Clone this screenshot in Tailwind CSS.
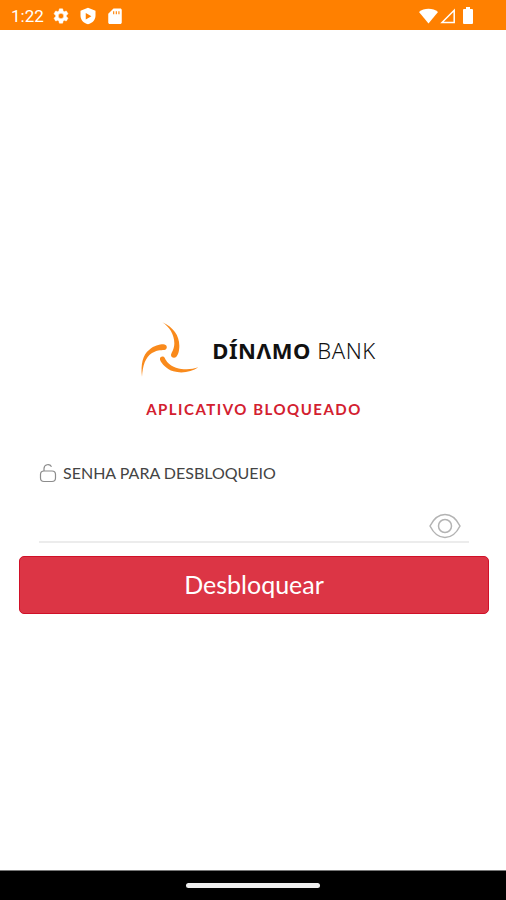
<!DOCTYPE html>
<html lang="pt-BR">
<head>
  <meta charset="UTF-8" />
  <meta name="viewport" content="width=device-width, initial-scale=1.0" />
  <title>Dínamo Bank</title>
  <script src="https://cdn.jsdelivr.net/npm/@tailwindcss/browser@4"></script>
</head>
<body class="min-h-screen flex flex-col bg-white font-['Lato',sans-serif]">

  <!-- Status bar -->
  <header class="h-[30px] pt-px px-[11px] flex items-center justify-between bg-[#ff8000] text-white">
    <div class="flex items-center gap-2">
      <span class="text-[17px] leading-5 font-['Roboto',sans-serif]">1:22</span>
      <svg class="size-[18px]" viewBox="0 0 24 24" fill="currentColor" aria-hidden="true">
        <path d="M19.14 12.94c.04-.3.06-.61.06-.94 0-.32-.02-.64-.07-.94l2.03-1.58a.49.49 0 0 0 .12-.61l-1.92-3.32a.49.49 0 0 0-.59-.22l-2.39.96c-.5-.38-1.03-.7-1.62-.94l-.36-2.54a.48.48 0 0 0-.48-.41h-3.84c-.24 0-.43.17-.47.41l-.36 2.54c-.59.24-1.13.57-1.62.94l-2.39-.96a.48.48 0 0 0-.59.22L2.74 8.87a.48.48 0 0 0 .12.61l2.03 1.58c-.05.3-.09.63-.09.94s.02.64.07.94l-2.03 1.58a.49.49 0 0 0-.12.61l1.92 3.32c.12.22.37.29.59.22l2.39-.96c.5.38 1.03.7 1.62.94l.36 2.54c.05.24.24.41.48.41h3.84c.24 0 .44-.17.47-.41l.36-2.54c.59-.24 1.13-.56 1.62-.94l2.39.96c.22.08.47 0 .59-.22l1.92-3.32a.48.48 0 0 0-.12-.61zM12 15.600A3.600 3.600 0 1 1 12 8.400a3.600 3.600 0 0 1 0 7.200z" stroke="currentColor" stroke-width=".6"/>
      </svg>
      <svg class="size-[18px] ml-px" viewBox="0 0 24 24" fill="currentColor" fill-rule="evenodd" aria-hidden="true">
        <path d="M12 1 2 5v6.500c0 5.300 4.200 10 10 11.500 5.800-1.500 10-6.200 10-11.500V5zM9 8l7.500 4.200L9 16.500z"/>
      </svg>
      <svg class="size-[18px] ml-px" viewBox="0 0 24 24" fill="currentColor" fill-rule="evenodd" aria-hidden="true">
        <path d="M19 2h-9L3 9v11.500c0 1.100.9 2 2 2h14c1.100 0 2-.9 2-2V4c0-1.100-.9-2-2-2zM9.500 5.500h1.500v4H9.500zM13 5.500h1.500v4H13zM16.500 5.500H18v4h-1.500z"/>
      </svg>
    </div>
    <div class="flex items-center gap-[2px] pr-[22px]">
      <svg class="w-[19px] h-4" viewBox="0 0 19 16" fill="currentColor" aria-hidden="true">
        <path d="M0 4C5-.3 14-.3 19 4L9.500 15.500z"/>
      </svg>
      <svg class="size-4" viewBox="0 0 16 16" fill="none" stroke="currentColor" stroke-width="1.500" aria-hidden="true">
        <path d="M2 14.500 14.200 2.300v12.200z"/>
      </svg>
      <svg class="w-[10px] h-[17px] ml-[5px]" viewBox="0 0 10 17" fill="currentColor" aria-hidden="true">
        <path d="M3 0h4v2h2q1 0 1 1v13q0 1-1 1H1q-1 0-1-1V3q0-1 1-1h2z"/>
      </svg>
    </div>
  </header>

  <main class="flex-1 flex flex-col justify-center pt-[34px] pl-[19px] pr-[17px]">
    <div class="flex items-center justify-center gap-4 pl-2">
      <svg class="w-14 h-[58px]" viewBox="30 21 168 174" overflow="visible" aria-hidden="true">
        <g fill="#f98a1c">
          <path d="M97 25C130 40 148 65 148 95C148 112 144 122 139 128C134 134 122 131 123 122C125 115 133 105 133 88C133 62 118 38 97 25Z"/>
          <path d="M36 188C32 150 38 122 58 107C72 95 88 91 100 91C111 91 114 103 106 107C98 109 84 106 66 117C46 130 38 155 36 188Z"/>
          <path d="M205 160C185 174 155 179 130 172C110 165 95 150 90 137C88 127 100 124 104 131C109 142 118 154 138 161C160 168 185 167 205 160Z"/>
        </g>
      </svg>
      <p class="text-[22px] leading-6 tracking-wide text-[#111] whitespace-nowrap font-['Noto_Sans',sans-serif]"><span class="font-bold">DÍNΛMO</span> <span class="font-light">BANK</span></p>
    </div>

    <h1 class="mt-5 text-center text-[15px] leading-5 font-bold tracking-widest text-[#d3202f]">APLICATIVO BLOQUEADO</h1>

    <form class="mt-11">
      <div class="mx-5">
        <label for="senha" class="flex items-center gap-[6px] text-base leading-5 text-[#444]">
          <svg class="w-[18px] h-5" viewBox="0 0 18 20" fill="none" stroke="#8c8c8c" stroke-width="1.200" aria-hidden="true">
            <rect x="1.500" y="8" width="15" height="10.500" rx="3.500"/>
            <path d="M5 8V5.500a4 4 0 0 1 7.500-1.800"/>
          </svg>
          SENHA PARA DESBLOQUEIO
        </label>
        <div class="mt-7 flex items-center border-b-2 border-[#ececec]">
          <input id="senha" type="password" class="flex-1 min-w-0 h-[30px] text-lg outline-none" />
          <button type="button" aria-label="Mostrar senha" class="mr-2">
            <svg class="w-8 h-[26px]" viewBox="0 0 32 26" fill="none" stroke="#b3b3b3" stroke-width="1.500" aria-hidden="true">
              <path d="M1 13C5 5 10 1.500 16 1.500S27 5 31 13C27 21 22 24.500 16 24.500S5 21 1 13z"/>
              <circle cx="16" cy="13" r="6.500"/>
            </svg>
          </button>
        </div>
      </div>
      <button type="submit" class="mt-[13px] w-full h-[58px] rounded-[5px] border border-[#d01028] bg-[#dc3545] text-[25px] text-white">Desbloquear</button>
    </form>
  </main>

  <!-- Navigation bar -->
  <footer class="h-[30px] flex items-center justify-center border-t border-[#777] bg-black">
    <div class="w-[134px] h-[5px] rounded-full bg-[#eee]"></div>
  </footer>

</body>
</html>
